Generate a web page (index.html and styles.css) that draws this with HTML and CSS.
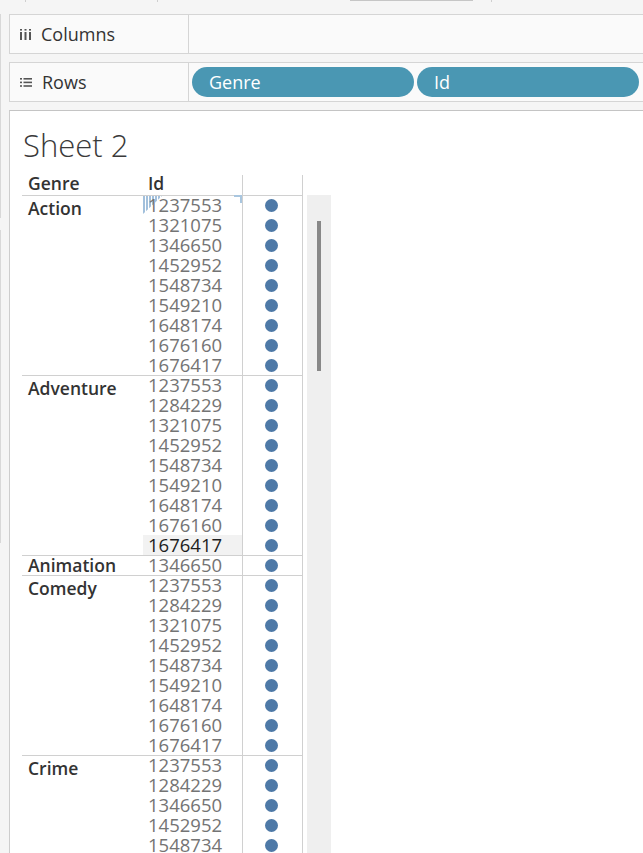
FILE: index.html
```html
<!DOCTYPE html>
<html>
<head>
<meta charset="utf-8">
<link rel="stylesheet" href="styles.css">
</head>
<body>
<div class="app">
  <div class="topstrip"></div>

  <div class="shelf">
    <div class="shelf-label">
      <svg class="icon" width="11" height="11" viewBox="0 0 11 11">
        <rect x="0" y="0" width="2" height="1.6" fill="#555"/>
        <rect x="0" y="3" width="2" height="8" fill="#555"/>
        <rect x="4.5" y="0" width="2" height="1.6" fill="#555"/>
        <rect x="4.5" y="3" width="2" height="8" fill="#555"/>
        <rect x="9" y="0" width="2" height="1.6" fill="#555"/>
        <rect x="9" y="3" width="2" height="8" fill="#555"/>
      </svg>
      <span>Columns</span>
    </div>
    <div class="shelf-drop"></div>
  </div>

  <div class="shelf">
    <div class="shelf-label">
      <svg class="icon" width="12" height="9" viewBox="0 0 12 9">
        <rect x="0" y="0" width="2" height="1.6" fill="#555"/>
        <rect x="3.5" y="0" width="8.5" height="1.6" fill="#555"/>
        <rect x="0" y="3.6" width="2" height="1.6" fill="#555"/>
        <rect x="3.5" y="3.6" width="8.5" height="1.6" fill="#555"/>
        <rect x="0" y="7.2" width="2" height="1.6" fill="#555"/>
        <rect x="3.5" y="7.2" width="8.5" height="1.6" fill="#555"/>
      </svg>
      <span>Rows</span>
    </div>
    <div class="shelf-drop">
      <span class="pill">Genre</span>
      <span class="pill">Id</span>
    </div>
  </div>

  <div class="sheet">
    <h1 class="title">Sheet 2</h1>
    <div class="viz">
      <div class="table">
        <div class="thead">
          <div class="c-genre">Genre</div>
          <div class="c-id head-id">Id</div>
          <div class="c-mark"></div>
        </div>

        <div class="group">
          <div class="c-genre label">Action</div>
          <div class="c-id ids">
            <div class="first"><span class="num">1237553</span></div>
            <div>1321075</div><div>1346650</div><div>1452952</div><div>1548734</div>
            <div>1549210</div><div>1648174</div><div>1676160</div><div>1676417</div>
          </div>
          <div class="c-mark marks"><i></i><i></i><i></i><i></i><i></i><i></i><i></i><i></i><i></i></div>
        </div>

        <div class="group">
          <div class="c-genre label">Adventure</div>
          <div class="c-id ids">
            <div>1237553</div><div>1284229</div><div>1321075</div><div>1452952</div><div>1548734</div>
            <div>1549210</div><div>1648174</div><div>1676160</div><div class="sel">1676417</div>
          </div>
          <div class="c-mark marks"><i></i><i></i><i></i><i></i><i></i><i></i><i></i><i></i><i></i></div>
        </div>

        <div class="group">
          <div class="c-genre label single">Animation</div>
          <div class="c-id ids"><div>1346650</div></div>
          <div class="c-mark marks"><i></i></div>
        </div>

        <div class="group">
          <div class="c-genre label">Comedy</div>
          <div class="c-id ids">
            <div>1237553</div><div>1284229</div><div>1321075</div><div>1452952</div><div>1548734</div>
            <div>1549210</div><div>1648174</div><div>1676160</div><div>1676417</div>
          </div>
          <div class="c-mark marks"><i></i><i></i><i></i><i></i><i></i><i></i><i></i><i></i><i></i></div>
        </div>

        <div class="group">
          <div class="c-genre label">Crime</div>
          <div class="c-id ids">
            <div>1237553</div><div>1284229</div><div>1346650</div><div>1452952</div><div>1548734</div>
          </div>
          <div class="c-mark marks"><i></i><i></i><i></i><i></i><i></i></div>
        </div>
      </div>
      <div class="scroll"><div class="thumb"></div></div>
    </div>
  </div>
</div>
</body>
</html>
```

FILE: styles.css
```css
* { box-sizing: border-box; }

html, body {
  margin: 0;
  padding: 0;
}

body {
  width: 643px;
  height: 853px;
  overflow: hidden;
  font-family: "Open Sans", "Liberation Sans", sans-serif;
  color: #333;
  background:
    linear-gradient(#d8d8d8, #d8d8d8) 0 14px / 1px 204px no-repeat,
    linear-gradient(#d8d8d8, #d8d8d8) 0 230px / 1px 313px no-repeat,
    #f5f5f5;
}

.app {
  height: 853px;
  overflow: hidden;
}

.topstrip {
  height: 14px;
  background:
    linear-gradient(#c6c6c6, #c6c6c6) 350px 0 / 123px 1px no-repeat,
    linear-gradient(#cfcfcf, #cfcfcf) 25px 0 / 1px 2px no-repeat,
    linear-gradient(#cfcfcf, #cfcfcf) 157px 0 / 1px 2px no-repeat,
    linear-gradient(#cfcfcf, #cfcfcf) 491px 0 / 1px 2px no-repeat;
}

.shelf {
  display: flex;
  height: 40px;
  margin-left: 9px;
  border: 1px solid #d5d5d5;
  border-right: none;
  background: #fafafa;
}

.shelf + .shelf {
  margin-top: 8px;
}

.shelf-label {
  width: 179px;
  border-right: 1px solid #d5d5d5;
  display: flex;
  align-items: center;
  gap: 10px;
  padding-left: 10px;
  font-size: 18px;
  color: #333;
}

.icon {
  display: block;
  flex: none;
}

.shelf-drop {
  flex: 1;
  display: flex;
  align-items: center;
  gap: 3px;
  padding-left: 3px;
}

.pill {
  width: 222px;
  height: 30px;
  border-radius: 15px;
  background: #4a97b3;
  color: #fff;
  font-size: 18px;
  display: flex;
  align-items: center;
  padding-left: 17px;
}

.sheet {
  margin-top: 8px;
  margin-left: 9px;
  height: 743px;
  overflow: hidden;
  border-top: 1px solid #c4c4c4;
  border-left: 1px solid #cdcdcd;
  background: #fff;
  padding: 14px 0 0 12px;
}

.title {
  margin: 0;
  padding-left: 1px;
  font-size: 31px;
  line-height: 40px;
  font-weight: 300;
  color: #3a3a3a;
}

.viz {
  display: flex;
  align-items: stretch;
  margin-top: 10px;
}

.table {
  width: 281px;
  flex: none;
}

.thead,
.group {
  display: flex;
}

.c-genre {
  width: 121px;
  padding-left: 6px;
}

.c-id {
  width: 100px;
  border-right: 1px solid #d0d0d0;
}

.c-mark {
  width: 60px;
  border-right: 1px solid #d0d0d0;
}

.thead {
  height: 20px;
  font-weight: 600;
  font-size: 17.5px;
  line-height: 17px;
  color: #333;
}

.head-id {
  padding-left: 5px;
}

.group {
  box-shadow: inset 0 1px 0 #d0d0d0;
}

.label {
  font-weight: 600;
  font-size: 17.5px;
  line-height: 20px;
  padding-top: 3px;
  color: #333;
}

.label.single {
  padding-top: 0;
}

.ids > div {
  position: relative;
  height: 20px;
  padding-left: 5px;
  font-size: 18.5px;
  line-height: 20px;
  color: #747474;
}

.ids > div.sel {
  background: #f2f2f2;
  color: #1e1e1e;
}

/* selection hatch in the first cell's top-left corner */
.ids > div.first::before {
  content: "";
  position: absolute;
  left: 0;
  top: 1px;
  width: 19px;
  height: 18px;
  background: repeating-linear-gradient(90deg, #a2c0dc 0 2px, #ffffff 2px 3px);
  clip-path: polygon(0 0, 100% 0, 0 100%);
}

/* small corner tick at the top-right of the first cell */
.ids > div.first::after {
  content: "";
  position: absolute;
  right: 0;
  top: 0;
  width: 6px;
  height: 6px;
  border-top: 2px solid #a9c6df;
  border-right: 2px solid #a9c6df;
}

.num {
  position: relative;
}

.marks {
  display: flex;
  flex-direction: column;
  padding-right: 2px;
}

.marks i {
  height: 20px;
  display: flex;
  align-items: center;
  justify-content: center;
}

.marks i::before {
  content: "";
  width: 13px;
  height: 13px;
  border-radius: 50%;
  background: #4e79a7;
}

.scroll {
  width: 24px;
  margin-left: 4px;
  margin-top: 20px;
  background: #efefef;
  padding: 26px 0 0 10px;
}

.thumb {
  width: 4px;
  height: 150px;
  background: #888;
}
```
